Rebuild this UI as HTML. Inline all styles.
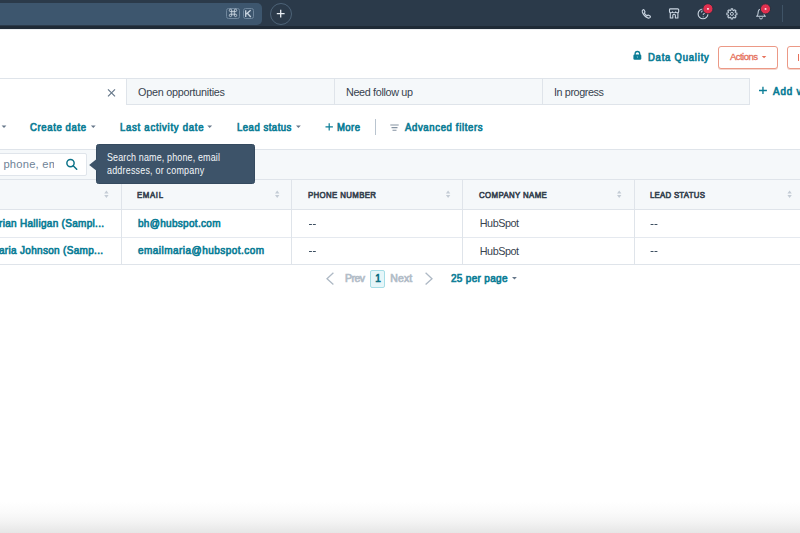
<!DOCTYPE html>
<html><head><meta charset="utf-8">
<style>
html,body{margin:0;padding:0;width:800px;height:533px;overflow:hidden;background:#fff;font-family:"Liberation Sans",sans-serif;}
.a{position:absolute;box-sizing:border-box;}
.t{position:absolute;line-height:1;white-space:nowrap;}
svg{position:absolute;overflow:visible;}
</style></head><body>
<!-- top nav -->
<div class="a" style="left:0;top:0;width:800px;height:27px;background:#2b3a4a"></div>
<div class="a" style="left:0;top:26px;width:800px;height:2.5px;background:#1f2a36"></div>
<div class="a" style="left:0;top:28.5px;width:800px;height:1.5px;background:#eef0f2"></div>
<div class="a" style="left:-10px;top:2.5px;width:271.5px;height:22px;background:#3d566e;border-radius:5px"></div>
<!-- keycaps -->
<div class="a" style="left:226.3px;top:8px;width:13.3px;height:10.9px;border:1px solid #6f869c;border-radius:2.5px"></div>
<div class="a" style="left:242.5px;top:8px;width:11px;height:10.9px;border:1px solid #6f869c;border-radius:2.5px"></div>
<svg style="left:0;top:0" width="300" height="30"><g fill="none" stroke="#c9d4df" stroke-width=".85"><path d="M231.70 10.40V15.40M234.30 10.40V15.40M230.50 11.60H235.50M230.50 14.20H235.50"/><circle cx="230.50" cy="10.40" r="1.2"/><circle cx="235.50" cy="10.40" r="1.2"/><circle cx="230.50" cy="15.40" r="1.2"/><circle cx="235.50" cy="15.40" r="1.2"/></g>
<path d="M245.7 10.3v6.7M250.6 10.3l-4.3 3.7M247.4 13.2l3.4 3.8" fill="none" stroke="#c9d4df" stroke-width="1.3"/></svg>
<!-- plus circle -->
<div class="a" style="left:270px;top:2.5px;width:22px;height:22px;border:1px solid #4d6378;border-radius:50%"></div>
<svg style="left:0;top:0" width="800" height="30">
  <path d="M280.7 9.8v7.8M276.8 13.7h7.8" stroke="#e8eef4" stroke-width="1.3"/>
  <!-- phone -->
  <path d="M643.5 9.6c-1 .5-1.6 1.4-1.2 2.5.9 2.6 3 4.8 5.6 5.9 1 .4 2-.1 2.6-1l-.4-1-2-1-1 .8c-1.2-.6-2.2-1.6-2.8-2.8l.8-1-1-2z" fill="none" stroke="#cbd6e2" stroke-width="1.1" stroke-linejoin="round"/>
  <!-- store -->
  <path d="M670.4 8.9h7.4a.9.9 0 0 1 .9.9v1.6c0 .8-.7 1.4-1.5 1.4-.7 0-1.3-.4-1.5-1-.2.6-.8 1-1.6 1s-1.4-.4-1.6-1c-.2.6-.8 1-1.5 1-.8 0-1.5-.6-1.5-1.4V9.8a.9.9 0 0 1 .9-.9z" fill="none" stroke="#cbd6e2" stroke-width="1.1" stroke-linejoin="round"/>
  <path d="M670.3 12.6v5.4h2.5v-2.5a1.3 1.3 0 0 1 2.6 0v2.5h2.5v-5.4" fill="none" stroke="#cbd6e2" stroke-width="1.1" stroke-linejoin="round"/>
  <!-- help -->
  <circle cx="703" cy="13.9" r="4.9" fill="none" stroke="#cbd6e2" stroke-width="1.1"/>
  <path d="M701.4 12.4c0-1 .8-1.6 1.7-1.6s1.7.6 1.7 1.5c0 1.3-1.6 1.4-1.6 2.7" fill="none" stroke="#aebccb" stroke-width="1.1"/>
  <circle cx="703.2" cy="16.8" r=".6" fill="#aebccb"/>
  <circle cx="707.9" cy="8.8" r="5.1" fill="#e0304f" stroke="#26323f" stroke-width="1"/>
  <rect x="707.1" y="8" width="1.7" height="1.7" fill="#fbe3e7"/>
  <!-- gear -->
  <path d="M730.85 10.35 L731.10 8.86 L732.70 8.86 L732.95 10.35 L733.67 10.65 L734.90 9.77 L736.03 10.90 L735.15 12.13 L735.45 12.85 L736.94 13.10 L736.94 14.70 L735.45 14.95 L735.15 15.67 L736.03 16.90 L734.90 18.03 L733.67 17.15 L732.95 17.45 L732.70 18.94 L731.10 18.94 L730.85 17.45 L730.13 17.15 L728.90 18.03 L727.77 16.90 L728.65 15.67 L728.35 14.95 L726.86 14.70 L726.86 13.10 L728.35 12.85 L728.65 12.13 L727.77 10.90 L728.90 9.77 L730.13 10.65z" fill="none" stroke="#c3cfdb" stroke-width="1.05" stroke-linejoin="round"/>
  <circle cx="731.9" cy="13.9" r="1.5" fill="none" stroke="#c3cfdb" stroke-width="1"/>
  <!-- bell -->
  <path d="M756.6 16.3c1.1-.9 1.5-1.8 1.5-3.3 0-2.1 1.2-3.7 2.9-3.9 1.7.2 2.9 1.8 2.9 3.9 0 1.5.4 2.4 1.5 3.3z" fill="none" stroke="#c3cfdb" stroke-width="1.05" stroke-linejoin="round"/>
  <path d="M759.5 17.5a1.5 1.5 0 0 0 3 0" fill="none" stroke="#c3cfdb" stroke-width="1"/>
  <circle cx="765.5" cy="8.9" r="5.1" fill="#e0304f" stroke="#26323f" stroke-width="1"/>
  <rect x="764.7" y="8.1" width="1.7" height="1.7" fill="#fbe3e7"/>
  <path d="M782.5 5v17" stroke="#3f5366" stroke-width="1"/>
</svg>

<!-- header right -->
<svg style="left:0;top:0" width="800" height="80">
  <path d="M635.1 55v-1.2a2.3 2.3 0 0 1 4.6 0v1.2" fill="none" stroke="#0b7d96" stroke-width="1.3"/>
  <rect x="633.4" y="54.4" width="7.9" height="5.4" rx="1.3" fill="#0b7d96"/>
  <path d="M636.7 56.6h1.4l-.7 1.6z" fill="#8fd0dc"/>
</svg>
<div class="a" style="left:718px;top:46.3px;width:60.3px;height:22.3px;border:1px solid #ec9986;border-radius:3px;background:#fff;box-shadow:0 1px 0 #f3d5cd"></div>
<svg style="left:0;top:0" width="800" height="80"><path d="M761.8 56h4.5l-2.25 2.3z" fill="#e6705a"/></svg>
<div class="a" style="left:786.5px;top:46.3px;width:40px;height:22.3px;border:1px solid #ec9986;border-radius:3px;background:#fff;box-shadow:0 1px 0 #f3d5cd"></div>
<div class="a" style="left:797.5px;top:53.5px;width:1.3px;height:7px;background:#e6705a"></div>

<!-- tabs -->
<div class="a" style="left:0;top:78px;width:750px;height:1px;background:#dfe4ea"></div>
<div class="a" style="left:126px;top:78px;width:624px;height:27px;background:#f5f8fa;border:1px solid #dfe4ea;border-right:1px solid #dfe4ea"></div>
<div class="a" style="left:334px;top:78px;width:1px;height:27px;background:#dfe4ea"></div>
<div class="a" style="left:541.5px;top:78px;width:1px;height:27px;background:#dfe4ea"></div>
<svg style="left:0;top:0" width="800" height="110">
  <path d="M108 89.3l7 7M115 89.3l-7 7" stroke="#66788a" stroke-width="1.2"/>
  <path d="M762.95 86.8v7.3M759 90.45h7.9" stroke="#0b7d96" stroke-width="1.35"/>
</svg>

<!-- filter bar -->
<svg style="left:0;top:0" width="800" height="150">
  <path d="M1.6 125.6h4.8l-2.4 2.4z" fill="#66778a"/>
  <path d="M90.9 125.6h4.8l-2.4 2.4z" fill="#66778a"/>
  <path d="M207.3 125.6h4.8l-2.4 2.4z" fill="#66778a"/>
  <path d="M296 125.6h4.8l-2.4 2.4z" fill="#66778a"/>
  <path d="M329.2 123.2v7.4M325.5 126.9h7.4" stroke="#0b7d96" stroke-width="1.2"/>
  <path d="M375.5 119v16" stroke="#b9c4cf" stroke-width="1"/>
  <path d="M390.3 125h8.4M391.5 127.6h6M392.5 130.3h4" stroke="#8593a2" stroke-width="1.05"/>
</svg>

<!-- gray region -->
<div class="a" style="left:0;top:149px;width:800px;height:1px;background:#dfe4ea"></div>
<div class="a" style="left:0;top:150px;width:800px;height:60px;background:#f5f8fa"></div>
<div class="a" style="left:-5px;top:152.8px;width:92.4px;height:23.4px;background:#fff;border:1px solid #e0e5eb;border-radius:2px"></div>
<svg style="left:0;top:0" width="800" height="200">
  <circle cx="70.5" cy="163.1" r="3.65" fill="none" stroke="#0b7288" stroke-width="1.45"/>
  <path d="M73.2 165.8l3.5 3.5" stroke="#0b7288" stroke-width="1.5" stroke-linecap="round"/>
</svg>
<div class="a" style="left:0;top:179.3px;width:800px;height:1px;background:#dfe4ea"></div>
<div class="a" style="left:0;top:209px;width:800px;height:1px;background:#dfe4ea"></div>
<div class="a" style="left:0;top:237px;width:800px;height:1px;background:#e5e9ef"></div>
<div class="a" style="left:0;top:264px;width:800px;height:1px;background:#dfe4ea"></div>
<div class="a" style="left:121px;top:180px;width:1px;height:84px;background:#dfe4ea"></div>
<div class="a" style="left:291px;top:180px;width:1px;height:84px;background:#dfe4ea"></div>
<div class="a" style="left:462.2px;top:180px;width:1px;height:84px;background:#dfe4ea"></div>
<div class="a" style="left:633.7px;top:180px;width:1px;height:84px;background:#dfe4ea"></div>
<svg style="left:0;top:0" width="800" height="300">
  <g fill="#c4ccd5">
    <path d="M104.2 193.5h4.4l-2.2-3z M104.2 195h4.4l-2.2 3z"/>
    <path d="M275 193.5h4.4l-2.2-3z M275 195h4.4l-2.2 3z"/>
    <path d="M445.9 193.5h4.4l-2.2-3z M445.9 195h4.4l-2.2 3z"/>
    <path d="M617 193.5h4.4l-2.2-3z M617 195h4.4l-2.2 3z"/>
    <path d="M787.4 193.5h4.4l-2.2-3z M787.4 195h4.4l-2.2 3z"/>
  </g>
  <g stroke="#3d4f61" stroke-width="1.1">
    <path d="M309 224.5h2.9M312.9 224.5h2.9 M309 251.5h2.9M312.9 251.5h2.9"/>
    <path d="M650.6 224.5h2.9M654.5 224.5h2.9 M650.6 251.5h2.9M654.5 251.5h2.9"/>
  </g>
  <!-- pagination -->
  <path d="M333.4 272.8l-6.4 5.9 6.4 5.9" fill="none" stroke="#aeb9c5" stroke-width="1.3"/>
  <path d="M425.6 272.8l6.4 5.9-6.4 5.9" fill="none" stroke="#aeb9c5" stroke-width="1.3"/>
  <path d="M512 276.9h4.9l-2.45 2.6z" fill="#66778a"/>
</svg>
<div class="a" style="left:370.3px;top:270.2px;width:15px;height:17.4px;border:1px solid #a6dde6;background:#e6f6f9;border-radius:2px"></div>

<!-- tooltip -->
<div class="a" style="left:96.4px;top:144.3px;width:158.3px;height:39.4px;background:#3d5369;border:1px solid #354a5f;border-radius:2.5px"></div>
<svg style="left:0;top:0" width="800" height="200"><path d="M97.5 158.3l-8.3 6.6 8.3 6.6z" fill="#3d5369"/></svg>

<div class="t" style="left:648.2px;top:51.91px;font-size:10.5px;font-weight:400;-webkit-text-stroke:0.7px #0b7d96;color:#0b7d96;letter-spacing:0.889px;transform:scaleX(0.9000);transform-origin:0 0;">Data Quality</div>
<div class="t" style="left:729.9px;top:52.47px;font-size:9.6px;font-weight:400;color:#e6705a;letter-spacing:-0.561px;-webkit-text-stroke:0.3px #e6705a;">Actions</div>
<div class="t" style="left:138.0px;top:86.86px;font-size:10.8px;font-weight:400;color:#37434f;letter-spacing:-0.250px;">Open opportunities</div>
<div class="t" style="left:346.0px;top:86.86px;font-size:10.8px;font-weight:400;color:#37434f;letter-spacing:-0.341px;">Need follow up</div>
<div class="t" style="left:554.0px;top:86.86px;font-size:10.8px;font-weight:400;color:#37434f;letter-spacing:-0.402px;">In progress</div>
<div class="t" style="left:773.0px;top:85.57px;font-size:10.9px;font-weight:400;-webkit-text-stroke:0.7px #0b7d96;color:#0b7d96;letter-spacing:0.955px;transform:scaleX(0.9000);transform-origin:0 0;">Add view</div>
<div class="t" style="left:30.0px;top:121.63px;font-size:10.6px;font-weight:400;-webkit-text-stroke:0.7px #0b7d96;color:#0b7d96;letter-spacing:0.686px;transform:scaleX(0.9000);transform-origin:0 0;">Create date</div>
<div class="t" style="left:119.5px;top:121.63px;font-size:10.6px;font-weight:400;-webkit-text-stroke:0.7px #0b7d96;color:#0b7d96;letter-spacing:0.816px;transform:scaleX(0.9000);transform-origin:0 0;">Last activity date</div>
<div class="t" style="left:236.6px;top:121.63px;font-size:10.6px;font-weight:400;-webkit-text-stroke:0.7px #0b7d96;color:#0b7d96;letter-spacing:0.566px;transform:scaleX(0.9000);transform-origin:0 0;">Lead status</div>
<div class="t" style="left:337.0px;top:121.63px;font-size:10.6px;font-weight:400;-webkit-text-stroke:0.7px #0b7d96;color:#0b7d96;letter-spacing:0.472px;transform:scaleX(0.9000);transform-origin:0 0;">More</div>
<div class="t" style="left:404.5px;top:121.63px;font-size:10.6px;font-weight:400;-webkit-text-stroke:0.7px #0b7d96;color:#0b7d96;letter-spacing:0.716px;transform:scaleX(0.9000);transform-origin:0 0;">Advanced filters</div>
<div class="t" style="left:3.4px;top:158.92px;font-size:11.2px;font-weight:400;color:#6f8397;letter-spacing:0.216px;width:51px;overflow:hidden;height:14px">phone, em</div>
<div class="t" style="left:107.4px;top:152.50px;font-size:10.4px;font-weight:400;color:#f4f7fa;letter-spacing:0.175px;transform:scaleX(0.8600);transform-origin:0 0;">Search name, phone, email</div>
<div class="t" style="left:107.4px;top:165.70px;font-size:10.4px;font-weight:400;color:#f4f7fa;letter-spacing:0.245px;transform:scaleX(0.8600);transform-origin:0 0;">addresses, or company</div>
<div class="t" style="left:137.0px;top:190.00px;font-size:9.8px;font-weight:400;-webkit-text-stroke:0.7px #37434f;color:#37434f;letter-spacing:0.773px;transform:scaleX(0.8000);transform-origin:0 0;">EMAIL</div>
<div class="t" style="left:307.6px;top:190.00px;font-size:9.8px;font-weight:400;-webkit-text-stroke:0.7px #37434f;color:#37434f;letter-spacing:0.452px;transform:scaleX(0.8000);transform-origin:0 0;">PHONE NUMBER</div>
<div class="t" style="left:478.5px;top:190.00px;font-size:9.8px;font-weight:400;-webkit-text-stroke:0.7px #37434f;color:#37434f;letter-spacing:0.462px;transform:scaleX(0.8000);transform-origin:0 0;">COMPANY NAME</div>
<div class="t" style="left:649.6px;top:190.00px;font-size:9.8px;font-weight:400;-webkit-text-stroke:0.7px #37434f;color:#37434f;letter-spacing:0.311px;transform:scaleX(0.8000);transform-origin:0 0;">LEAD STATUS</div>
<div class="t" style="left:-1.0px;top:217.80px;font-size:11.1px;font-weight:400;-webkit-text-stroke:0.7px #0b7d96;color:#0b7d96;letter-spacing:0.342px;transform:scaleX(0.9000);transform-origin:0 0;">rian Halligan (Sampl...</div>
<div class="t" style="left:-1.0px;top:245.30px;font-size:11.1px;font-weight:400;-webkit-text-stroke:0.7px #0b7d96;color:#0b7d96;letter-spacing:0.351px;transform:scaleX(0.9000);transform-origin:0 0;">aria Johnson (Samp...</div>
<div class="t" style="left:137.5px;top:217.80px;font-size:11.1px;font-weight:400;-webkit-text-stroke:0.7px #0b7d96;color:#0b7d96;letter-spacing:0.349px;transform:scaleX(0.9000);transform-origin:0 0;">bh@hubspot.com</div>
<div class="t" style="left:137.5px;top:245.30px;font-size:11.1px;font-weight:400;-webkit-text-stroke:0.7px #0b7d96;color:#0b7d96;letter-spacing:0.522px;transform:scaleX(0.9000);transform-origin:0 0;">emailmaria@hubspot.com</div>
<div class="t" style="left:479.8px;top:218.16px;font-size:10.8px;font-weight:400;color:#37434f;letter-spacing:-0.472px;">HubSpot</div>
<div class="t" style="left:479.8px;top:245.66px;font-size:10.8px;font-weight:400;color:#37434f;letter-spacing:-0.472px;">HubSpot</div>
<div class="t" style="left:344.9px;top:273.31px;font-size:10.5px;font-weight:400;-webkit-text-stroke:0.7px #b3bdc8;color:#b3bdc8;letter-spacing:-0.498px;">Prev</div>
<div class="t" style="left:375.3px;top:273.74px;font-size:10px;font-weight:400;-webkit-text-stroke:0.7px #0b6f84;color:#0b6f84;letter-spacing:-0.363px;">1</div>
<div class="t" style="left:390.3px;top:273.31px;font-size:10.5px;font-weight:400;-webkit-text-stroke:0.7px #b3bdc8;color:#b3bdc8;letter-spacing:0.135px;">Next</div>
<div class="t" style="left:451.0px;top:273.10px;font-size:11.1px;font-weight:400;-webkit-text-stroke:0.7px #0b7d96;color:#0b7d96;letter-spacing:0.356px;transform:scaleX(0.9000);transform-origin:0 0;">25 per page</div>

<!-- bottom shade -->
<div class="a" style="left:0;top:502px;width:800px;height:31px;background:linear-gradient(to bottom,rgba(255,255,255,0) 0%,#fafafa 35%,#f3f3f3 65%,#e6e6e6 100%)"></div>
</body></html>
